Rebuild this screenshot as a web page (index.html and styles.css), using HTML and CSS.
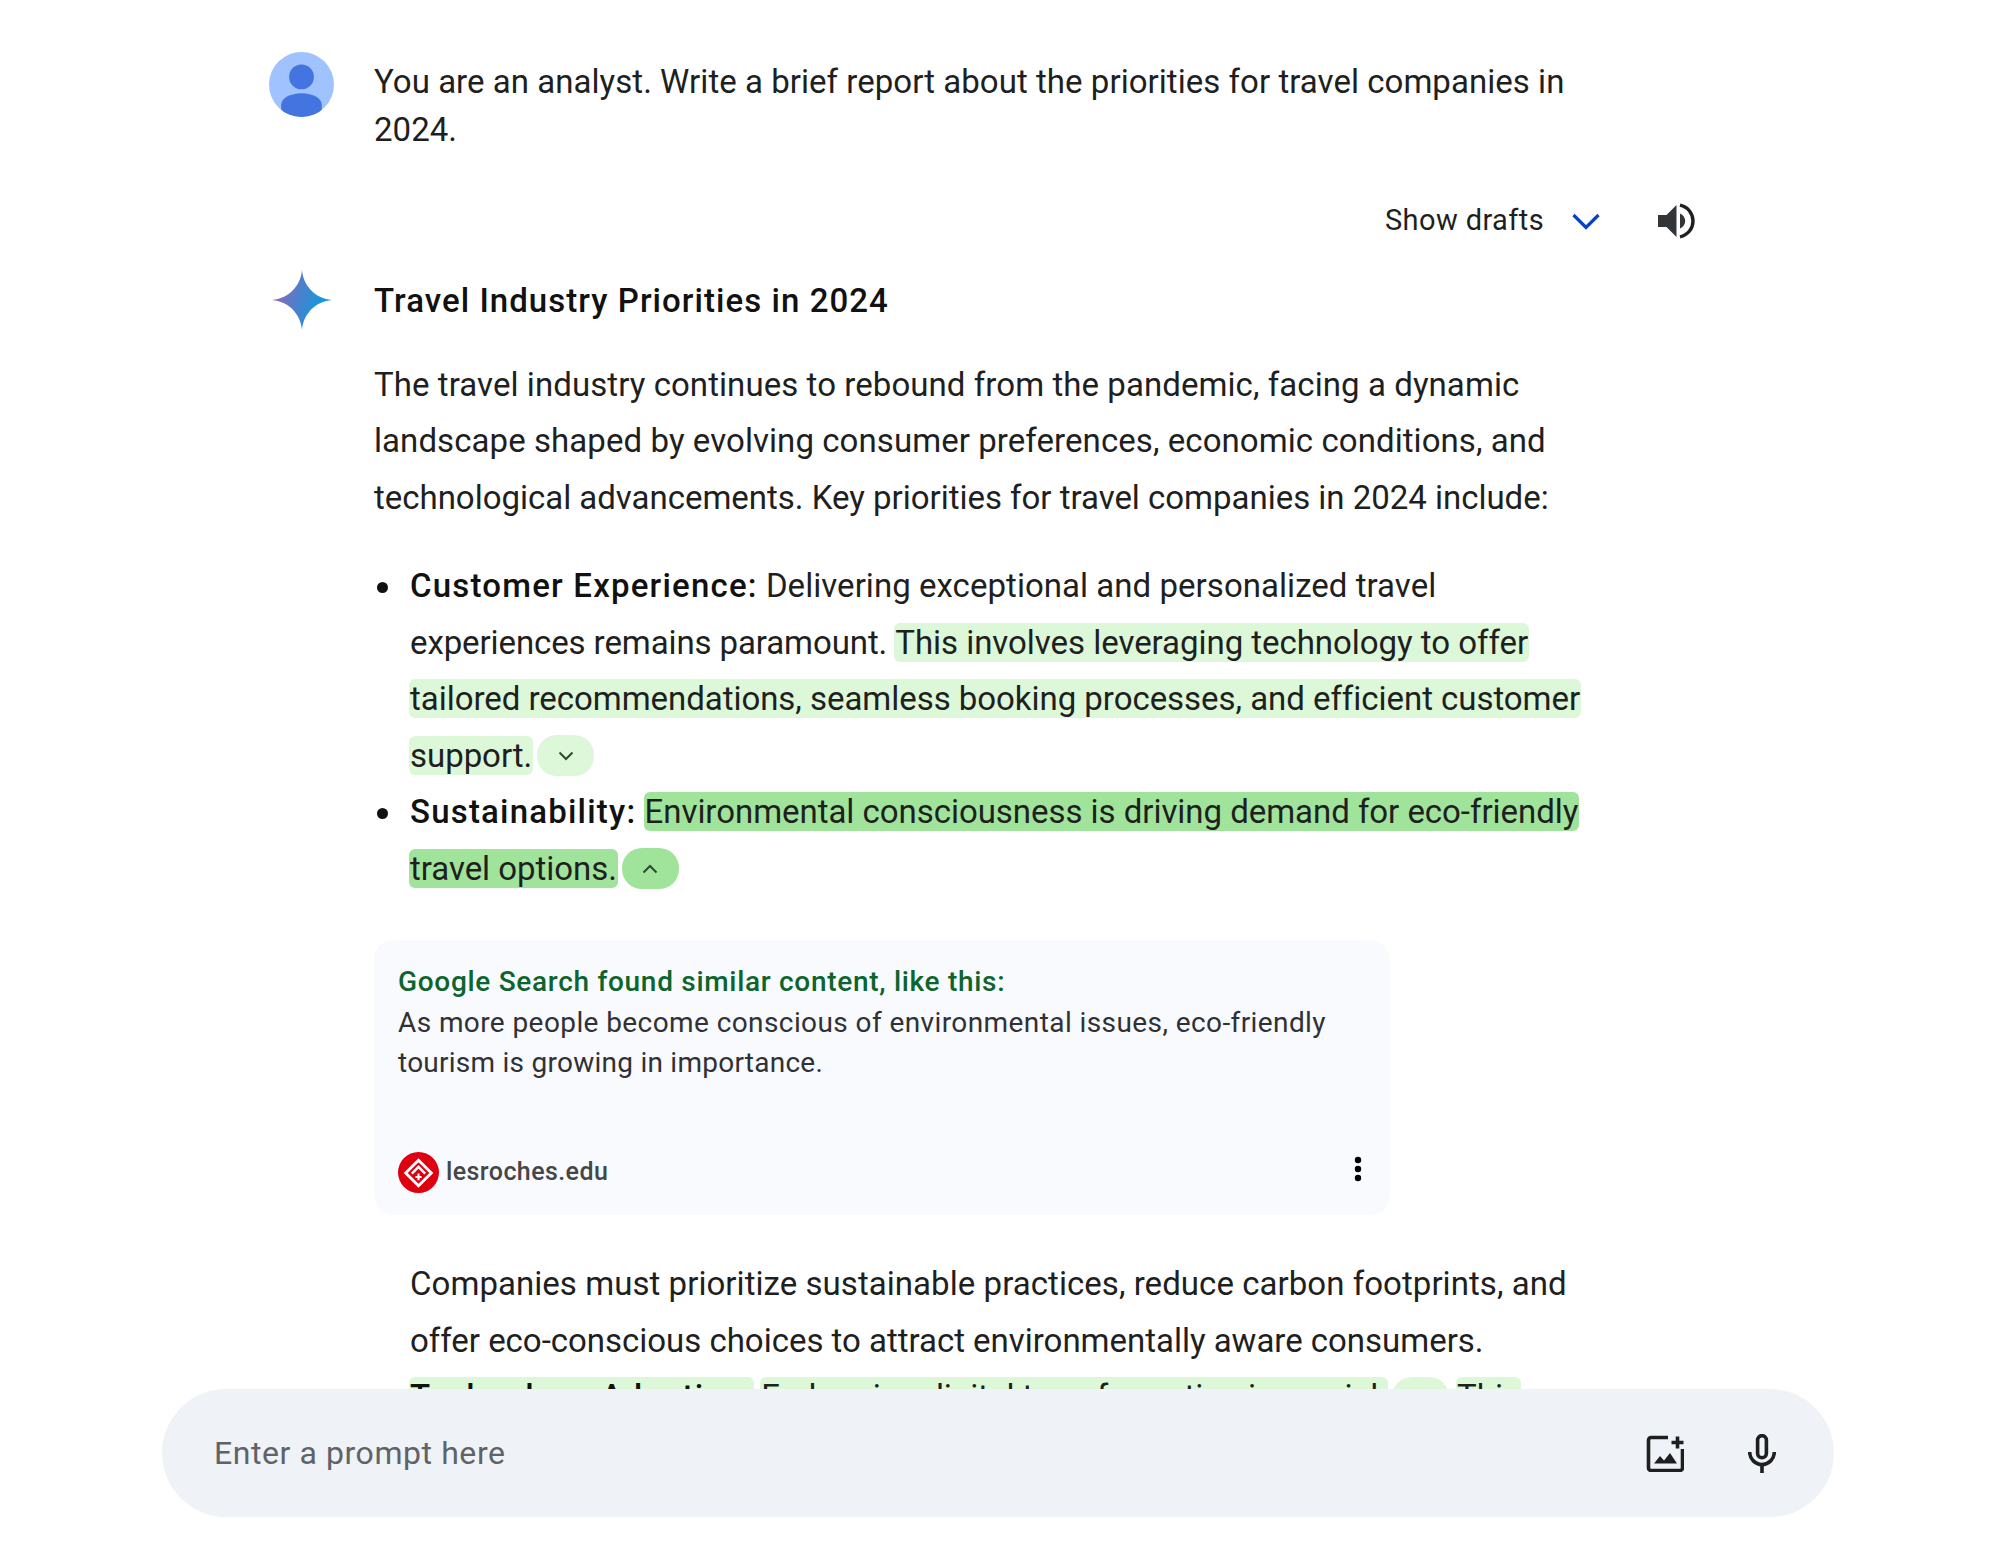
FILE: index.html
```html
<!DOCTYPE html>
<html lang="en">
<head>
    <meta charset="UTF-8">
    <meta name="viewport" content="width=device-width, initial-scale=1.0">
    <title>Travel Industry Priorities in 2024</title>
    <link rel="stylesheet" href="styles.css">
</head>
<body>

<main class="chat">
    <div class="query">
        <svg class="avatar" viewBox="0 0 64 64">
            <clipPath id="circle"><circle cx="32" cy="32" r="32"/></clipPath>
            <g clip-path="url(#circle)">
                <rect width="64" height="64" fill="#a0c2ff"/>
                <circle cx="32" cy="24.5" r="12.2" fill="#4374e0"/>
                <path d="M12 64V52c0-6.500 9-11.500 20-11.500S52 45.500 52 52v12z" fill="#4374e0"/>
            </g>
        </svg>
        <p>You are an analyst. Write a brief report about the priorities for travel companies in<br>2024.</p>
    </div>

    <div class="toolbar">
        <span class="drafts">Show drafts</span>
        <svg class="drafts-arrow" viewBox="0 0 28 18"><path d="M1.500 2L14 14.500 26.500 2" fill="none" stroke="#0842c8" stroke-width="3.300"/></svg>
        <svg class="speaker" viewBox="0 0 38 36">
            <path d="M0 12h8.500L18.500 2v32L8.500 24H0z" fill="#333639"/>
            <path d="M22 10.500c3.200 1.500 5.200 4.200 5.200 7.500s-2 6-5.200 7.500z" fill="#333639"/>
            <path d="M22 2.200C30 4 35 10.500 35 18s-5 14-13 15.800" fill="none" stroke="#1f1f1f" stroke-width="3.400"/>
        </svg>
    </div>

    <div class="answer">
        <svg class="star" viewBox="0 0 62 62">
            <defs>
                <linearGradient id="spark" x1="0" y1="0.3" x2="1" y2="0.600">
                    <stop offset="0.05" stop-color="#9168c0"/>
                    <stop offset="0.45" stop-color="#4c80cc"/>
                    <stop offset="0.800" stop-color="#1b95dc"/>
                </linearGradient>
            </defs>
            <path d="M31 0C32.500 17 45 29.500 62 31C45 32.500 32.500 45 31 62C29.500 45 17 32.500 0 31C17 29.500 29.500 17 31 0z" fill="url(#spark)"/>
        </svg>
        <div class="content">
            <h2>Travel Industry Priorities in 2024</h2>
            <p class="intro">The travel industry continues to rebound from the pandemic, facing a dynamic<br>landscape shaped by evolving consumer preferences, economic conditions, and<br><span class="tight">technological advancements. Key priorities for travel companies in 2024 include:</span></p>

            <ul>
                <li><strong>Customer Experience:</strong> Delivering exceptional and personalized travel<br><span class="tighter">experiences remains paramount. </span><mark>This involves leveraging technology to offer<br>tailored recommendations, seamless booking processes, and efficient customer<br>support.</mark><span class="chip"><svg viewBox="0 0 16 10"><path d="M1.500 1.500L8 8l6.500-6.500"/></svg></span></li>
                <li><strong>Sustainability:</strong> <mark class="active">Environmental consciousness is driving demand for eco-friendly<br>travel options.</mark><span class="chip active"><svg viewBox="0 0 16 10"><path d="M1.500 8.500L8 2l6.500 6.500"/></svg></span></li>
            </ul>

            <div class="source-card">
                <h3>Google Search found similar content, like this:</h3>
                <p>As more people become conscious of environmental issues, eco-friendly<br><span class="narrow">tourism is growing in importance.</span></p>
                <div class="source">
                    <svg class="favicon" viewBox="0 0 40 40">
                        <circle cx="20" cy="20" r="20" fill="#de0010"/>
                        <path d="M20 8L32.500 20.500 20 33 7.500 20.500z" fill="none" stroke="#fff" stroke-width="2.800"/>
                        <path d="M13.500 21L20 14.500 26.500 21" fill="none" stroke="#fff" stroke-width="2.400"/>
                        <path d="M20 21v6.500M17 24.300h6" stroke="#fff" stroke-width="2"/>
                    </svg>
                    <span>lesroches.edu</span>
                    <svg class="dots" viewBox="0 0 8 26">
                        <circle cx="4" cy="4" r="3.200"/><circle cx="4" cy="13" r="3.200"/><circle cx="4" cy="22" r="3.200"/>
                    </svg>
                </div>
            </div>

            <p class="more">Companies must prioritize sustainable practices, reduce carbon footprints, and<br><span class="tight">offer eco-conscious choices to attract environmentally aware consumers.</span><br><mark><strong>Technology Adoption:</strong></mark> <mark class="tighter">Embracing digital transformation is crucial.</mark><span class="chip"><svg viewBox="0 0 16 10"><path d="M1.500 1.500L8 8l6.500-6.500"/></svg></span> <mark>This</mark></p>
        </div>
    </div>
</main>

<div class="prompt">
    <span>Enter a prompt here</span>
    <svg class="add-image" viewBox="0 0 38 38">
        <path d="M22 3.500H5A2.500 2.500 0 0 0 2.500 6v28A2.500 2.500 0 0 0 5 36.500h29a2.500 2.500 0 0 0 2.500-2.500V15" fill="none" stroke="#1f1f1f" stroke-width="3.600"/>
        <path d="M31.500 2.500v12M25.500 8.500h12" stroke="#1f1f1f" stroke-width="3.600"/>
        <path d="M8 29.500l6-7.500 4 4.500 6-7.500 7 10.500z" fill="#1f1f1f"/>
    </svg>
    <svg class="mic" viewBox="0 0 28 39">
        <rect x="9.600" y="1.700" width="8.800" height="22" rx="4.400"/>
        <path d="M1.700 18c0 7 5.500 12.500 12.300 12.500S26.300 25 26.300 18M14 30.500V39"/>
    </svg>
</div>

</body>
</html>
```
FILE: styles.css
```css
body {
    margin: 0;
    height: 1544px;
    overflow: hidden;
    background: #fff;
    color: #1f1f1f;
    font-family: Roboto, Arial, sans-serif;
    font-size: 33px;
    line-height: 56.5px;
    letter-spacing: 0.04px;
    white-space: nowrap;
}
p, h2, h3, ul {
    margin: 0;
    padding: 0;
    font-size: inherit;
}
svg {
    display: block;
    flex: none;
}
strong, h2 {
    font-weight: 500;
    letter-spacing: 1.05px;
    color: #111;
}
.chat {
    box-sizing: border-box;
    height: 1389px;
    padding: 52px 304px 0 269px;
    overflow: hidden;
}
.query {
    display: flex;
    gap: 40px;
    height: 148px;
    line-height: 48px;
}
.query p {
    padding-top: 6px;
}
.avatar {
    width: 65px;
    height: 65px;
}
.toolbar {
    display: flex;
    align-items: center;
    justify-content: flex-end;
    height: 41px;
    font-size: 29px;
    line-height: 41px;
}
.drafts {
    letter-spacing: 0.4px;
}
.drafts-arrow {
    width: 28px;
    height: 18px;
    margin: 3px 58px 0 28px;
}
.speaker {
    width: 38px;
    height: 36px;
}
.answer {
    display: flex;
    gap: 42px;
    padding-top: 32px;
}
.star {
    width: 60px;
    height: 62px;
    margin: -4px 0 0 3px;
}
.intro {
    padding-top: 27px;
    letter-spacing: 0.07px;
}
ul {
    list-style: none;
    padding-top: 32px;
}
li {
    padding-left: 36px;
}
li::before {
    content: "";
    display: inline-block;
    width: 11px;
    height: 11px;
    margin: 0 22px 0 -33px;
    border-radius: 50%;
    background: #111;
    vertical-align: 4px;
}
li strong {
    letter-spacing: 1.2px;
}
.more {
    padding: 41px 0 0 36px;
    letter-spacing: 0.05px;
}
mark {
    padding: 0 1px;
    margin: 0 -1px;
    border-radius: 6px;
    color: inherit;
    background: #dcf8d8;
    letter-spacing: -0.04px;
    -webkit-box-decoration-break: clone;
    box-decoration-break: clone;
}
.active {
    background: #a0e49c;
}
.tight {
    letter-spacing: -0.02px;
}
.tighter {
    letter-spacing: -0.1px;
}
.narrow {
    letter-spacing: 0.25px;
}
.chip {
    display: inline-flex;
    align-items: center;
    justify-content: center;
    width: 57px;
    height: 41px;
    margin-left: 5px;
    border-radius: 20px;
    background: #dcf8d8;
    vertical-align: 6px;
}
.chip.active {
    background: #a0e49c;
}
/* baseline of the chip is the bottom edge of its arrow */
.chip svg {
    width: 16px;
    height: 10px;
    fill: none;
    stroke: #2c4a30;
    stroke-width: 2;
}
.source-card {
    box-sizing: border-box;
    width: 1016px;
    height: 275px;
    margin-top: 43px;
    padding: 21px 24px 0;
    border-radius: 20px;
    background: #f8fafe;
    font-size: 28px;
    line-height: 39.5px;
    letter-spacing: 0.41px;
    color: #303134;
}
.source-card h3 {
    font-weight: 500;
    line-height: 42px;
    letter-spacing: 0.7px;
    color: #0d652d;
}
.source {
    display: flex;
    align-items: center;
    gap: 7px;
    margin-top: 69px;
    font-size: 25px;
    font-weight: 500;
    line-height: 42px;
    color: #444746;
}
.favicon {
    width: 41px;
    height: 41px;
}
.dots {
    width: 8px;
    height: 26px;
    margin: 0 4px 7px auto;
}
.prompt {
    display: flex;
    align-items: center;
    box-sizing: border-box;
    width: 1672px;
    height: 128px;
    margin-left: 162px;
    padding: 0 58px 0 52px;
    border-radius: 64px;
    background: #eff3f8;
    font-size: 32px;
    letter-spacing: 0.57px;
    color: #5f6368;
}
.add-image {
    width: 38px;
    height: 38px;
    margin-left: auto;
}
.mic {
    width: 28px;
    height: 39px;
    margin-left: 64px;
    fill: none;
    stroke: #1f1f1f;
    stroke-width: 3.6;
}
```
